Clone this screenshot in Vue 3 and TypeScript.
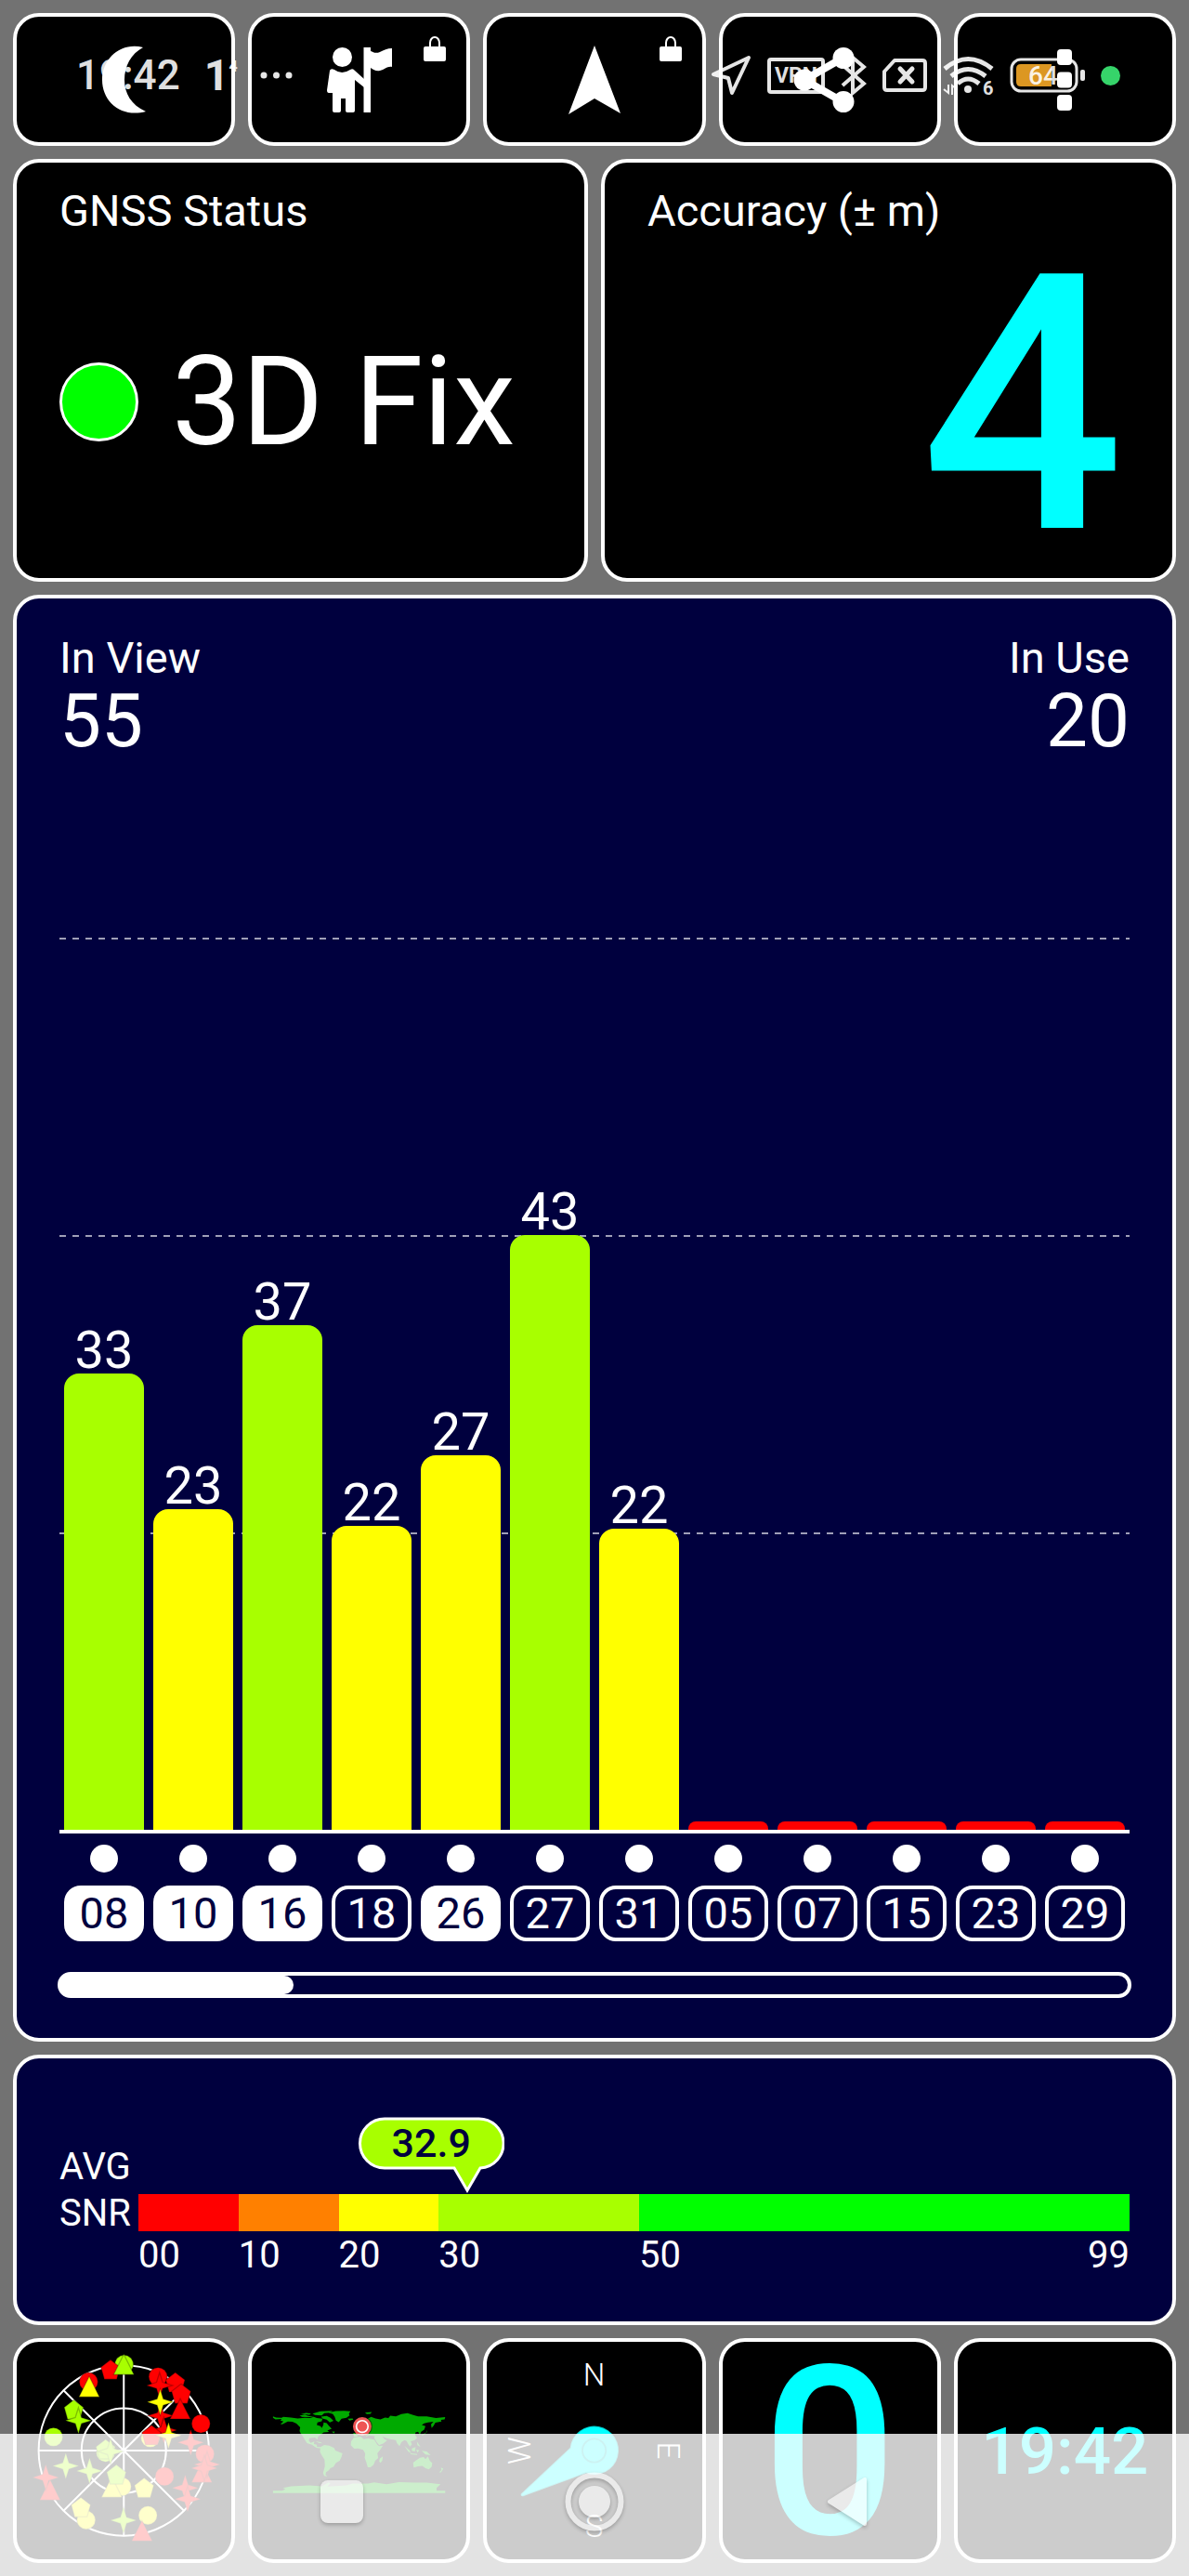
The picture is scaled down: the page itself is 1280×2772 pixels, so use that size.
<script setup lang="ts">
type MarkKind = 'circle' | 'pentagon' | 'triangle' | 'star'

interface Satellite {
  id: string
  snr: number
  inUse: boolean
}

interface Mark {
  kind: MarkKind
  color: string
  x: number
  y: number
}

const RED = '#ff0000'
const LIME = '#a8ff00'
const YELLOW = '#ffff00'

const scaleMax = 64.5

const satellites: Satellite[] = [
  { id: '08', snr: 33, inUse: true },
  { id: '10', snr: 23.2, inUse: true },
  { id: '16', snr: 36.5, inUse: true },
  { id: '18', snr: 22, inUse: false },
  { id: '26', snr: 27.1, inUse: true },
  { id: '27', snr: 43, inUse: false },
  { id: '31', snr: 21.8, inUse: false },
  { id: '05', snr: 0, inUse: false },
  { id: '07', snr: 0, inUse: false },
  { id: '15', snr: 0, inUse: false },
  { id: '23', snr: 0, inUse: false },
  { id: '29', snr: 0, inUse: false },
]

const inView = 55
const inUse = 20

const level = (snr: number): string => (snr === 0 ? 'none' : snr >= 30 ? 'good' : 'fair')
const barHeight = (snr: number): string => `${Math.max((snr / scaleMax) * 100, 0.9)}%`
const shownSnr = (snr: number): string => (snr === 0 ? '' : String(Math.round(snr)))

const bands = [
  { label: '00', span: 10, color: '#ff0000' },
  { label: '10', span: 10, color: '#ff8000' },
  { label: '20', span: 10, color: '#ffff00' },
  { label: '30', span: 20, color: '#a8ff00' },
  { label: '50', span: 49, color: '#00ff00' },
]

const mark = (kind: MarkKind, color: string, points: number[][]): Mark[] =>
  points.map(([x, y]) => ({ kind, color, x, y }))

const marks: Mark[] = [
  ...mark('circle', LIME, [[402, 132], [173, 367], [342, 418]]),
  ...mark('circle', RED, [[512, 172], [287, 188], [651, 324], [664, 422], [533, 495]]),
  ...mark('circle', YELLOW, [[487, 370], [395, 528], [279, 636], [479, 621]]),
  ...mark('triangle', YELLOW, [[362, 532]]),
  ...mark('star', RED, [[520, 298], [531, 345]]),
  ...mark('pentagon', RED, [[358, 150], [568, 191], [587, 228], [491, 362]]),
  ...mark('pentagon', LIME, [[239, 280], [342, 408], [377, 490]]),
  ...mark('pentagon', YELLOW, [[467, 533], [262, 596]]),
  ...mark('triangle', LIME, [[401, 135]]),
  ...mark('triangle', YELLOW, [[289, 207]]),
  ...mark('triangle', RED, [[584, 279], [654, 484], [162, 541], [460, 674]]),
  ...mark('star', RED, [[517, 200], [618, 385], [671, 456], [662, 468], [600, 532], [608, 568], [148, 498]]),
  ...mark('star', YELLOW, [[519, 254], [546, 362]]),
  ...mark('star', LIME, [[254, 314], [358, 414], [213, 461], [290, 477], [400, 637]]),
]

const shapes: Record<MarkKind, string> = {
  circle: 'M-30 0A30 30 0 1 1 30 0A30 30 0 1 1 -30 0Z',
  pentagon: 'M0 -33L31 -9L20 30H-20L-31 -9Z',
  triangle: 'M0 -36L33 30H-33Z',
  star: 'M0 -42L10 -10L42 0L10 10L0 42L-10 10L-42 0L-10 -10Z',
}
</script>

<template>
  <main class="page">
    <nav class="tiles">
      <button class="tile" type="button" aria-label="Night mode">
        <svg width="47" height="73" viewBox="0 0 47 73" fill="#fff">
          <path d="M44 2C21 -4 0 13 0 37C0 61 21 78 47 71C31 64 24 51 24 37C24 22 31 9 44 2Z" />
        </svg>
      </button>
      <button class="tile" type="button" aria-label="Guide">
        <svg width="72" height="72" viewBox="0 0 72 72" fill="#fff">
          <circle cx="17.5" cy="11.5" r="10.5" />
          <path d="M40.500 1H48V71H40.500Z" />
          <path d="M48 5C51 6 53 8 58 6C62 4 66 2 71 2V22C66 21 63 25 58 26C54 27 51 25 48 23Z" />
          <path d="M4 26Q5 23 9 25Q17 31 26 25Q29 23 31 26L41 35V44L31 36L31 69Q31 71 29 71H23Q21 71 21 69V56H16V69Q16 71 14 71H9Q7 71 7 69V50H3Q1 50 1 47Z" />
        </svg>
        <svg class="lock" width="24" height="27" viewBox="0 0 24 27">
          <rect x="0" y="11" width="24" height="16" rx="2" fill="#fff" />
          <path d="M7 12V7a5 6 0 0 1 10 0V12" fill="none" stroke="#fff" stroke-width="2" />
        </svg>
      </button>
      <button class="tile" type="button" aria-label="Navigate">
        <svg width="56" height="74" viewBox="0 0 56 74" fill="#fff">
          <path d="M28 0L56 73L28 57L0 74Z" />
        </svg>
        <svg class="lock" width="24" height="27" viewBox="0 0 24 27">
          <rect x="0" y="11" width="24" height="16" rx="2" fill="#fff" />
          <path d="M7 12V7a5 6 0 0 1 10 0V12" fill="none" stroke="#fff" stroke-width="2" />
        </svg>
      </button>
      <button class="tile" type="button" aria-label="Share">
        <svg width="78" height="70" viewBox="0 0 78 70" fill="#fff">
          <path d="M54 11L12 35L54 59" fill="none" stroke="#fff" stroke-width="8" />
          <circle cx="54" cy="11.500" r="11.500" />
          <circle cx="12" cy="35" r="11.500" />
          <circle cx="54" cy="58.500" r="11.500" />
        </svg>
      </button>
      <button class="tile" type="button" aria-label="Menu">
        <svg width="16" height="66" viewBox="0 0 16 66" fill="#fff">
          <rect x="0" y="0" width="16" height="17" rx="4" />
          <rect x="0" y="24.500" width="16" height="17" rx="4" />
          <rect x="0" y="49" width="16" height="17" rx="4" />
        </svg>
      </button>
    </nav>

    <section class="pair">
      <article class="card">
        <h2 class="label">GNSS Status</h2>
        <div class="fix">
          <span class="lamp"></span>
          <span class="fix-text">3D Fix</span>
        </div>
      </article>
      <article class="card">
        <h2 class="label">Accuracy (± m)</h2>
        <div class="accuracy">4</div>
      </article>
    </section>

    <section class="card chart">
      <header class="counts">
        <div>
          <div class="label">In View</div>
          <div class="count">{{ inView }}</div>
        </div>
        <div class="right">
          <div class="label">In Use</div>
          <div class="count">{{ inUse }}</div>
        </div>
      </header>
      <div class="plot">
        <div class="rules"><i></i><i></i><i></i></div>
        <div v-for="s in satellites" :key="s.id" class="col">
          <span class="value">{{ shownSnr(s.snr) }}</span>
          <span class="bar" :class="level(s.snr)" :style="{ height: barHeight(s.snr) }"></span>
        </div>
      </div>
      <div class="ids">
        <div v-for="s in satellites" :key="s.id" class="sat">
          <span class="dot"></span>
          <span class="tag" :class="{ solid: s.inUse }">{{ s.id }}</span>
        </div>
      </div>
      <div class="track">
        <div class="thumb" :style="{ width: `${(satellites.length / inView) * 100}%` }"></div>
      </div>
    </section>

    <section class="card snr">
      <div class="snr-name">AVG<br />SNR</div>
      <div class="scale">
        <div class="bubble-row">
          <div class="bubble">
            <svg width="158" height="83" viewBox="0 0 158 83">
              <path d="M29 2H129A26.500 26.500 0 0 1 132 55L118 79L104 55H29A26.500 26.500 0 0 1 29 2Z" fill="#a8ff00" stroke="#fff" stroke-width="3" />
            </svg>
            <span class="bubble-text">32.9</span>
          </div>
        </div>
        <div class="bands">
          <span v-for="b in bands" :key="b.label" :style="{ flexGrow: b.span, background: b.color }"></span>
        </div>
        <div class="ticks">
          <span v-for="b in bands" :key="b.label" class="tick" :style="{ flexGrow: b.span }">{{ b.label }}</span>
          <span class="tick-end">99</span>
        </div>
      </div>
    </section>

    <section class="tiles">
      <div class="tile view">
        <svg class="fill" viewBox="54 60 696 702">
          <g fill="none" stroke="#fff" stroke-width="6">
            <circle cx="401" cy="411" r="276" />
            <circle cx="401" cy="411" r="137" />
            <path d="M401 135V687M125 411H677M206 216L596 606M596 216L206 606" />
          </g>
          <path
            v-for="(m, i) in marks"
            :key="i"
            :d="shapes[m.kind]"
            :transform="`translate(${m.x} ${m.y})`"
            :fill="m.color"
            stroke="#000"
            stroke-opacity="0.25"
            stroke-width="4"
          />
        </svg>
      </div>
      <div class="tile view">
        <svg class="fill" viewBox="813 60 696 702">
          <g fill="#00aa00">
            <path d="M882 300L892 304L910 305L915 302L940 304L962 307L985 305L1002 306L1014 302L1024 306L1042 308L1040 316L1026 320L1024 328L1036 332L1040 338L1045 328L1046 320L1056 322L1062 330L1072 340L1058 346L1064 351L1046 352L1038 358L1028 366L1026 376L1018 369L1000 371L998 379L1004 386L1016 382L1014 390L1024 392L1024 399L1038 400L1036 404L1022 402L1008 392L992 387L984 374L979 366L972 356L968 348L970 336L958 324L945 318L930 317L912 326L906 325L916 317L906 314L910 309L890 310L882 305Z" />
            <path d="M968 298L985 294L996 299L1015 301L1000 303L976 302ZM972 292L990 289L1005 291L1000 295ZM1010 291L1036 284L1075 282L1066 288L1048 290L1040 297L1018 296ZM1038 301L1056 299L1068 305L1078 315L1066 320L1056 311L1042 307Z" />
            <path d="M1062 288L1085 283L1112 282L1133 284L1128 291L1130 297L1120 305L1104 308L1095 319L1086 314L1082 302L1076 293Z" />
            <path d="M1124 308L1140 307L1142 311L1130 314ZM1020 381L1036 384L1042 388L1030 386ZM1072 350L1082 349L1080 355ZM1180 288L1202 286L1198 292L1186 293Z" />
            <path d="M1036 400L1048 393L1064 395L1080 403L1084 411L1107 420L1104 431L1098 444L1086 451L1078 464L1068 468L1062 476L1054 481L1052 489L1058 495L1048 493L1044 484L1050 462L1049 440L1040 427L1034 415Z" />
            <path d="M1144 369L1166 366L1176 374L1190 372L1210 376L1220 392L1226 397L1238 395L1228 410L1220 420L1223 435L1213 444L1208 457L1198 465L1189 465L1184 448L1179 434L1181 421L1174 409L1158 404L1145 405L1134 394L1135 382Z" />
            <path d="M1228 437L1238 430L1236 444L1230 451L1226 446Z" />
            <path d="M1144 366L1142 354L1156 354L1152 346L1166 344L1182 335L1188 326L1175 321L1182 312L1200 302L1214 307L1230 310L1245 304L1256 306L1262 298L1280 300L1298 293L1318 290L1336 296L1352 300L1380 300L1410 306L1440 303L1438 310L1426 312L1428 317L1408 321L1402 331L1396 338L1394 326L1402 318L1384 320L1372 323L1364 328L1376 332L1372 343L1362 350L1358 360L1352 350L1344 352L1342 360L1349 370L1340 378L1328 381L1332 391L1326 398L1320 390L1315 380L1308 377L1298 384L1292 397L1284 388L1280 377L1262 374L1250 371L1236 365L1244 375L1252 378L1240 388L1226 394L1218 384L1210 370L1212 364L1194 362L1184 365L1176 356L1164 358L1154 366Z" />
            <path d="M1144 348L1148 336L1156 344L1154 350ZM1364 360L1380 352L1382 344L1376 356L1366 363ZM1308 396L1324 410L1330 420L1320 414ZM1332 404L1344 400L1342 414L1332 412ZM1346 408L1356 410L1350 418ZM1328 420L1350 422L1348 425L1328 423ZM1364 412L1380 414L1393 426L1376 424ZM1348 382L1354 390L1360 400L1350 394ZM1420 482L1428 474L1426 466L1434 470L1426 482Z" />
            <path d="M1336 450L1348 441L1358 434L1370 432L1376 439L1384 430L1390 444L1398 452L1396 464L1387 472L1376 468L1366 461L1352 462L1338 466Z" />
            <path d="M882 549V541H912L922 536L914 532L940 527L1000 524L1040 527L1062 514L1068 517L1058 528L1085 526L1120 524L1140 518L1190 518L1210 514L1250 520L1290 513L1340 515L1380 515L1425 520L1412 532L1412 541H1440V549Z" />
          </g>
          <circle cx="1171" cy="333" r="33" fill="#000" fill-opacity="0.45" />
          <circle cx="1171" cy="333" r="30" fill="#ee5555" />
          <circle cx="1171" cy="333" r="19" fill="none" stroke="#fff" stroke-width="5" />
        </svg>
      </div>
      <div class="tile view">
        <svg class="fill" viewBox="72 60 696 702">
          <path d="M342 402A79 79 0 1 1 394 485L190 559Q180 560 183 551Z" fill="#00ffff" stroke="#000" stroke-opacity="0.25" stroke-width="6" />
          <circle cx="420" cy="411" r="38" fill="none" stroke="#000" stroke-opacity="0.25" stroke-width="6" />
          <g class="points">
            <text x="420" y="201">N</text>
            <text x="420" y="691">S</text>
            <text transform="translate(213 411) rotate(-90)">W</text>
            <text transform="translate(627 411) rotate(90)">E</text>
          </g>
        </svg>
      </div>
      <div class="tile view"><span class="speed">0</span></div>
      <div class="tile view"><span class="clock">19:42</span></div>
    </section>

    <div class="status">
      <span class="status-time">19:42</span>
      <span class="status-temp">1<sup>4</sup></span>
      <svg width="36" height="8" viewBox="0 0 36 8" fill="currentColor">
        <circle cx="4" cy="4" r="3.500" /><circle cx="17.500" cy="4" r="3.500" /><circle cx="31" cy="4" r="3.500" />
      </svg>
      <div class="status-icons">
        <svg width="43" height="44" viewBox="0 0 43 44" fill="none" stroke="currentColor" stroke-width="4" stroke-linejoin="round">
          <path d="M40 3L22 41L18 25L2 21Z" />
        </svg>
        <span class="vpn">VPN</span>
        <svg width="28" height="44" viewBox="0 0 28 44" fill="none" stroke="currentColor" stroke-width="4">
          <path d="M2 11L25 31L13 41V3L25 13L2 33" />
        </svg>
        <svg width="48" height="38" viewBox="0 0 48 38" fill="none" stroke="currentColor" stroke-width="4" stroke-linejoin="round">
          <path d="M13 3H43Q46 3 46 6V32Q46 35 43 35H5Q2 35 2 32V15Z" />
          <path d="M19 12L32 26M32 12L19 26" stroke-width="5" stroke-linecap="round" />
        </svg>
        <svg class="wifi" width="55" height="44" viewBox="0 0 55 44" fill="none" stroke="currentColor" stroke-width="5">
          <path d="M2 15Q27 -6 53 15M9 23Q27 8 46 23M16 31Q27 21 39 31" />
          <circle cx="27" cy="37" r="4" fill="currentColor" stroke="none" />
          <path d="M6 32V41L1 37M10 43V33L15 37" stroke-width="2" />
          <text class="wifi-gen" x="43" y="43">6</text>
        </svg>
        <svg width="81" height="38" viewBox="0 0 81 38">
          <rect x="2" y="2" width="70" height="34" rx="10" fill="none" stroke="currentColor" stroke-width="3" />
          <path d="M45 7V31H12Q7 31 7 26V12Q7 7 12 7Z" fill="#dc9722" />
          <rect x="76" y="13" width="5" height="12" rx="2" fill="currentColor" />
          <text class="battery" x="36" y="29">64</text>
        </svg>
        <span class="privacy"></span>
      </div>
    </div>

    <div class="system">
      <button type="button" aria-label="Recent apps">
        <svg width="64" height="64" viewBox="0 0 64 64"><rect x="9" y="9" width="46" height="46" rx="8" fill="#fff" /></svg>
      </button>
      <button type="button" aria-label="Home">
        <svg width="64" height="64" viewBox="0 0 64 64">
          <circle cx="32" cy="32" r="28.500" fill="none" stroke="#fff" stroke-width="6" />
          <circle cx="32" cy="32" r="17" fill="#fff" />
        </svg>
      </button>
      <button type="button" aria-label="Back">
        <svg width="64" height="64" viewBox="0 0 64 64">
          <path d="M13 32L51 8V56Z" fill="#fff" stroke="#fff" stroke-width="4" stroke-linejoin="round" />
        </svg>
      </button>
    </div>
  </main>
</template>

<style>
body {
  margin: 0;
  background: #727272;
}
</style>

<style scoped>
* {
  box-sizing: border-box;
}
.page {
  position: relative;
  display: flex;
  flex-direction: column;
  gap: 14px;
  padding: 14px;
  background: #727272;
  color: #fff;
  font-family: Roboto, 'Noto Sans', sans-serif;
}
.tiles {
  display: grid;
  grid-template-columns: repeat(5, minmax(0, 1fr));
  gap: 14px;
}
.tile {
  position: relative;
  display: flex;
  align-items: center;
  justify-content: center;
  height: 143px;
  padding: 0;
  border: 4px solid #fff;
  border-radius: 28px;
  background: #000;
  color: #fff;
  font: inherit;
}
.tile.view {
  height: 242px;
}
.fill {
  width: 100%;
  height: 100%;
}
.lock {
  position: absolute;
  top: 21px;
  right: 22px;
}
.pair {
  display: grid;
  grid-template-columns: repeat(2, minmax(0, 1fr));
  gap: 14px;
}
.card {
  display: flex;
  flex-direction: column;
  border: 4px solid #fff;
  border-radius: 28px;
  background: #000;
}
.pair .card {
  min-height: 455px;
  padding: 24px 46px 12px;
}
.label {
  margin: 0;
  font-size: 47px;
  font-weight: 400;
  line-height: 56px;
}
.fix {
  display: flex;
  flex: 1;
  align-items: center;
  gap: 36px;
}
.lamp {
  width: 85px;
  height: 85px;
  border: 3px solid #fff;
  border-radius: 50%;
  background: #00ff00;
}
.fix-text {
  font-size: 134px;
  line-height: 156px;
}
.accuracy {
  display: flex;
  flex: 1;
  align-items: center;
  justify-content: flex-end;
  padding: 8px 6px 0 0;
  color: #00ffff;
  font-size: 385px;
  font-weight: 500;
  line-height: 320px;
}
.chart {
  padding: 36px 46px 43px;
  background: #00003e;
}
.counts {
  display: flex;
  justify-content: space-between;
}
.right {
  text-align: right;
}
.count {
  font-size: 80px;
  line-height: 80px;
}
.plot {
  position: relative;
  display: grid;
  grid-template-columns: repeat(12, minmax(0, 1fr));
  height: 964px;
  margin-top: 193px;
  border-bottom: 4px solid #fff;
}
.rules {
  position: absolute;
  inset: 0;
  display: grid;
  grid-template-rows: repeat(3, 1fr);
}
.rules i {
  height: 2px;
  background: repeating-linear-gradient(90deg, #a0a0b8 0 7px, transparent 7px 14px);
}
.col {
  position: relative;
  display: flex;
  flex-direction: column;
  justify-content: flex-end;
  height: 100%;
  min-height: 0;
  padding: 0 5px;
}
.value {
  font-size: 56px;
  line-height: 50px;
  text-align: center;
}
.bar {
  flex-shrink: 0;
  border-radius: 16px 16px 0 0;
}
.good {
  background: #a8ff00;
}
.fair {
  background: #ffff00;
}
.none {
  border-radius: 8px 8px 0 0;
  background: #ff0000;
}
.ids {
  display: grid;
  grid-template-columns: repeat(12, minmax(0, 1fr));
  margin-top: 12px;
}
.sat {
  display: flex;
  flex-direction: column;
  align-items: center;
  gap: 14px;
  padding: 0 5px;
}
.dot {
  width: 30px;
  height: 30px;
  border-radius: 50%;
  background: #fff;
}
.tag {
  width: 100%;
  border: 4px solid #fff;
  border-radius: 18px;
  font-size: 47px;
  line-height: 52px;
  text-align: center;
}
.solid {
  background: #fff;
  color: #00003e;
}
.track {
  height: 28px;
  margin: 33px -2px 0;
  border: 4px solid #fff;
  border-radius: 14px;
}
.thumb {
  height: 100%;
  border-radius: 0 10px 10px 0;
  background: #fff;
}
.snr {
  flex-direction: row;
  padding: 63px 46px 47px;
  background: #00003e;
}
.snr-name {
  width: 85px;
  padding-top: 29px;
  font-size: 40px;
  line-height: 50px;
}
.scale {
  flex: 1;
}
.bubble-row {
  position: relative;
  height: 83px;
}
.bubble {
  position: absolute;
  left: 33.2%;
  width: 158px;
  margin-left: -118px;
}
.bubble svg {
  display: block;
}
.bubble-text {
  position: absolute;
  inset: 0;
  color: #00003e;
  font-size: 43px;
  font-weight: 500;
  line-height: 56px;
  text-align: center;
}
.bands,
.ticks {
  display: flex;
}
.bands {
  height: 40px;
}
.bands span,
.tick {
  flex-basis: 0;
  min-width: 0;
}
.ticks {
  position: relative;
  margin-top: 2px;
  font-size: 40px;
  line-height: 48px;
}
.tick-end {
  position: absolute;
  right: 0;
}
.points text {
  fill: #fff;
  font-size: 100px;
  font-weight: 300;
  text-anchor: middle;
}
.speed {
  padding-top: 6px;
  color: #00ffff;
  font-size: 254px;
  font-weight: 500;
  line-height: 228px;
}
.clock {
  color: #00ffff;
  font-size: 71px;
  font-weight: 500;
}
.status {
  position: absolute;
  top: 0;
  left: 0;
  right: 0;
  display: flex;
  align-items: center;
  height: 162px;
  padding: 0 74px 0 82px;
  color: rgba(255, 255, 255, 0.9);
  pointer-events: none;
}
.status-time {
  font-size: 44px;
  font-weight: 500;
}
.status-temp {
  margin: 0 24px 0 26px;
  font-size: 47px;
  font-weight: 700;
  line-height: 56px;
}
.status-temp sup {
  font-size: 16px;
  line-height: 1px;
  vertical-align: 20px;
}
.status-icons {
  display: flex;
  align-items: center;
  gap: 17px;
  margin-left: auto;
}
.vpn {
  width: 62px;
  border: 4px solid;
  border-radius: 4px;
  font-size: 23px;
  font-weight: 700;
  line-height: 31px;
  text-align: center;
}
.wifi {
  overflow: visible;
}
.wifi-gen {
  fill: currentColor;
  stroke: none;
  font-size: 20px;
  font-weight: 700;
}
.battery {
  fill: currentColor;
  font-size: 28px;
  font-weight: 500;
  text-anchor: middle;
}
.privacy {
  width: 21px;
  height: 21px;
  border-radius: 50%;
  background: #36d46a;
}
.system {
  position: absolute;
  right: 0;
  bottom: 0;
  left: 0;
  display: flex;
  align-items: center;
  justify-content: center;
  height: 153px;
  padding-bottom: 7px;
  background: rgba(255, 255, 255, 0.8);
}
.system button {
  display: flex;
  justify-content: center;
  width: 272px;
  padding: 0;
  border: 0;
  background: none;
  opacity: 0.6;
}
.system svg {
  filter: drop-shadow(0 2px 2px rgba(0, 0, 0, 0.4));
}
</style>
